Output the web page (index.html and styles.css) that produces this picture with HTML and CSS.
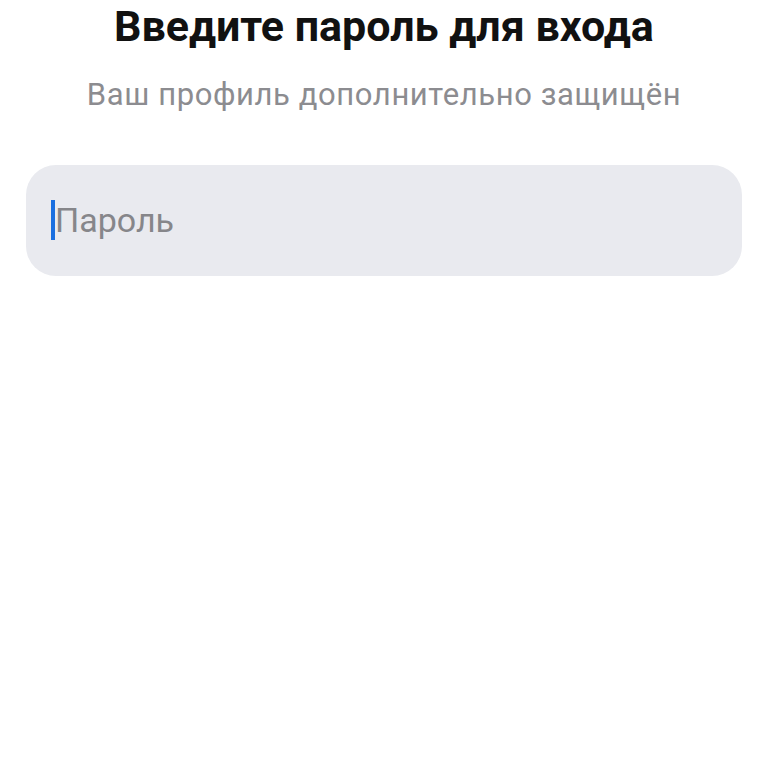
FILE: index.html
```html
<!DOCTYPE html>
<html lang="ru">
<head>
    <meta charset="UTF-8">
    <meta name="viewport" content="width=device-width, initial-scale=1.0">
    <title>Вход</title>
    <link rel="stylesheet" href="styles.css">
</head>
<body>
    <div class="login">
        <h1 class="login-title">Введите пароль для входа</h1>
        <p class="login-subtitle">Ваш профиль дополнительно защищён</p>

        <!-- Password field -->
        <div class="password-field">
            <span class="caret"></span>
            <span class="placeholder">Пароль</span>
        </div>
    </div>
</body>
</html>
```

FILE: styles.css
```css
body {
    font-family: Roboto, "Noto Sans", Arial, sans-serif;
    background-color: #fff;
    margin: 0;
    padding: 0;
}

.login {
    padding: 0 26px;
    text-align: center;
}

.login-title {
    margin: 0;
    padding-top: 1px;
    font-size: 43px;
    line-height: 50px;
    font-weight: 700;
    color: #111;
}

.login-subtitle {
    margin: 26px 0 0;
    font-size: 31px;
    line-height: 36px;
    letter-spacing: 0.6px;
    color: #8c8c90;
}

.password-field {
    display: flex;
    align-items: center;
    height: 111px;
    margin-top: 52px;
    padding: 0 25px;
    background: #e9eaef;
    border-radius: 30px;
    text-align: left;
}

.caret {
    width: 4px;
    height: 40px;
    margin-bottom: 2px;
    background: #1a6fe0;
}

.placeholder {
    padding-bottom: 2px;
    font-size: 34px;
    color: #86868a;
}
```
